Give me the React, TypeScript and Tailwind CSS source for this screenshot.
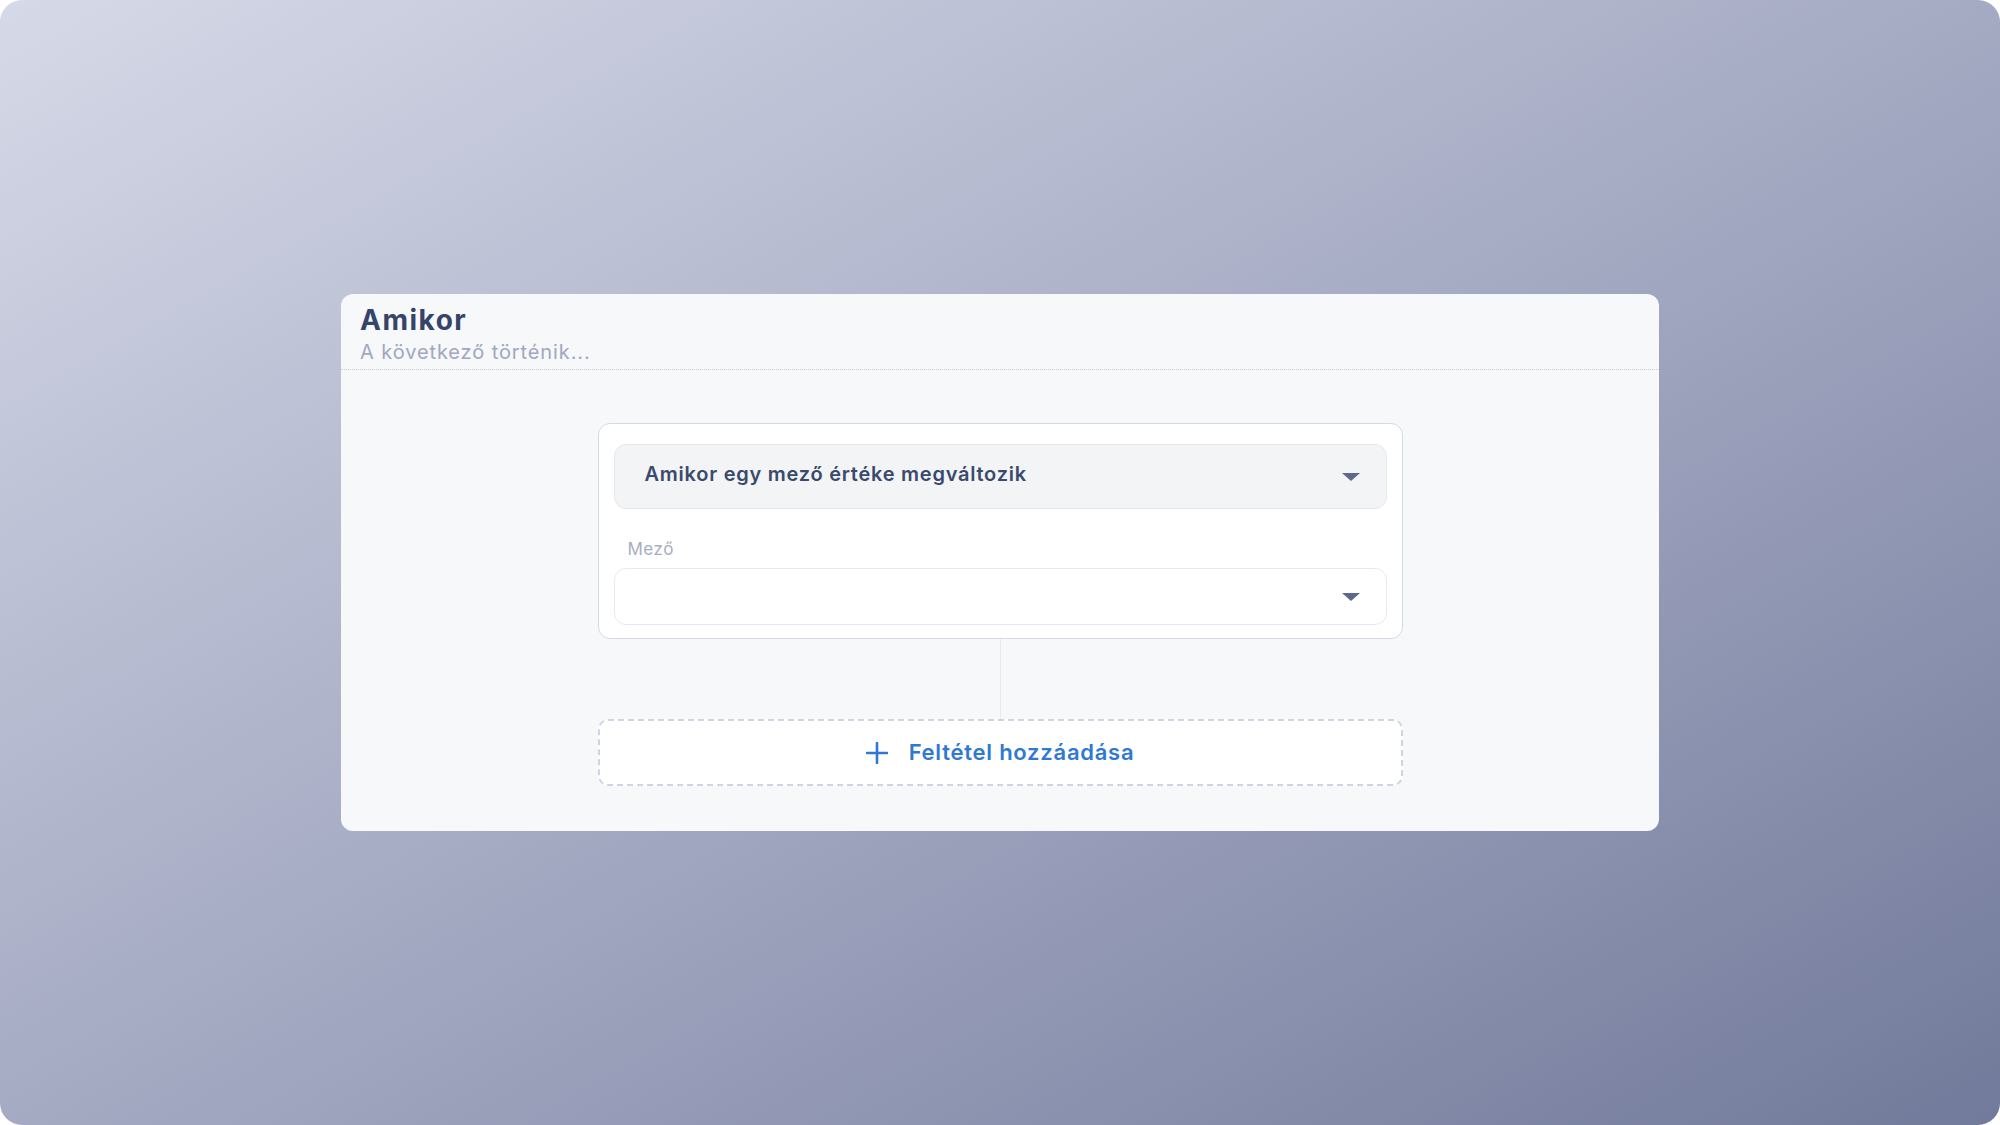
import React from "react";

function Caret() {
  return (
    <svg width="18" height="8" viewBox="0 0 18 8" className="shrink-0">
      <path d="M0 0 L18 0 L9 8 Z" fill="#5f6888" />
    </svg>
  );
}

export default function App() {
  return (
    <div className="w-[2000px] h-[1125px] bg-white" style={{ fontFamily: "Inter, 'Noto Sans', sans-serif" }}>
      <div className="w-full h-full rounded-[22px] bg-[linear-gradient(to_bottom_right,#d6d9e7_0%,#b8bdd2_30%,#9ba1bb_60%,#727a9b_100%)] flex items-center justify-center">
        <div className="w-[1318px] h-[537px] rounded-[12px] bg-[#f7f8fa] flex flex-col overflow-hidden">
          <div className="h-[76px] px-[19px] pt-[10px] border-b border-dotted border-[#cbcee2] shrink-0">
            <div className="text-[28px] leading-[32px] font-bold text-[#34446a] tracking-[1.5px]">Amikor</div>
            <div className="mt-[4px] text-[20px] leading-[24px] text-[#a0a7bf] tracking-[0.9px]">A következő történik...</div>
          </div>
          <div className="flex flex-col items-center pt-[53px]">
            <div className="w-[805px] border border-[#d6d9e6] rounded-[12px] bg-white px-[15px] pt-[20px] pb-[13px]">
              <div className="h-[65px] rounded-[12px] bg-[#f3f4f6] border border-[#e6e7ec] flex items-center justify-between pl-[30px] pr-[26px]">
                <span className="text-[20px] leading-[24px] font-semibold text-[#3a4a6c] tracking-[0.75px] mb-[6px]">Amikor egy mező értéke megváltozik</span>
                <Caret />
              </div>
              <div className="mt-[30px] mb-[9px] pl-[14px] text-[17px] leading-[20px] text-[#a7adc4] tracking-[0.5px]">Mező</div>
              <div className="h-[57px] rounded-[12px] bg-white border border-[#e8e9ee] flex items-center justify-end pr-[26px]">
                <Caret />
              </div>
            </div>
            <div className="w-px h-[80px] bg-[#e8eaef]" />
            <button className="w-[805px] h-[67px] border-2 border-dashed border-[#cfd3e2] rounded-[10px] bg-white flex items-center justify-center gap-[21px] text-[#2f78d3]">
              <svg width="22" height="22" viewBox="0 0 22 22">
                <path d="M11 1 V21 M1 11 H21" stroke="#2f78d3" strokeWidth="2.6" strokeLinecap="round" />
              </svg>
              <span className="text-[22px] font-semibold tracking-[0.75px]">Feltétel hozzáadása</span>
            </button>
          </div>
        </div>
      </div>
    </div>
  );
}
